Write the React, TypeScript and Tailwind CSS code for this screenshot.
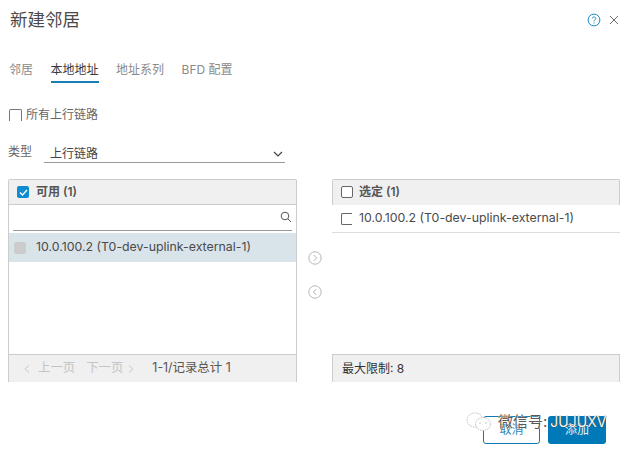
const font = { fontFamily: 'Inter, "Noto Sans CJK SC", sans-serif' };

function Wechat() {
  return (
    <svg width="26" height="20" viewBox="0 0 26 20" fill="none" stroke="#bdbdbd" strokeWidth="1" strokeDasharray="1.5 1">
      <ellipse cx="9" cy="8" rx="8" ry="7" />
      <ellipse cx="17" cy="12" rx="7.5" ry="6.5" fill="#fff" />
      <circle cx="14" cy="11" r="0.6" fill="#888" stroke="none" />
      <circle cx="20" cy="11" r="0.6" fill="#888" stroke="none" />
    </svg>
  );
}

function CircleArrow({ left }: { left?: boolean }) {
  return (
    <svg width="14" height="14" viewBox="0 0 14 14" fill="none" stroke="#b5b5b5" strokeWidth="1">
      <circle cx="7" cy="7" r="6.2" />
      <path d={left ? "M8.3 4 L5.3 7 L8.3 10" : "M5.7 4 L8.7 7 L5.7 10"} />
    </svg>
  );
}

export default function App() {
  return (
    <div className="relative w-[625px] h-[449px] bg-white overflow-hidden text-[#565656] pt-[8px]" style={font}>
      {/* title */}
      <div className="flex items-center justify-between pl-[10px] pr-[6px] h-[24px]">
        <span className="text-[17.5px] leading-[24px] text-[#4a4a4a]">新建邻居</span>
        <div className="flex items-center gap-[8px] text-[#555]">
          <svg width="14" height="14" viewBox="0 0 14 14" fill="none" stroke="#1b8ac6" strokeWidth="1">
            <circle cx="7" cy="7" r="5.9" />
            <path d="M5.2 5.4 C5.3 3.4 8.8 3.5 8.8 5.5 C8.8 6.9 7 6.8 7 8.4 M7 9.6 V10.6" />
          </svg>
          <svg width="10" height="10" viewBox="0 0 10 10" fill="none" stroke="#6b6b6b" strokeWidth="1">
            <path d="M1 1 L9 9 M9 1 L1 9" />
          </svg>
        </div>
      </div>

      {/* tabs */}
      <div className="flex gap-[17.5px] pl-[9px] mt-[29px] h-[22px] text-[12px] leading-[17px] text-[#8a8a8a]">
        <span>邻居</span>
        <span className="text-[#3a3a3a] h-[22px] border-b-2 border-[#1a7fb5]">本地地址</span>
        <span>地址系列</span>
        <span>BFD 配置</span>
      </div>

      {/* all uplinks */}
      <div className="flex items-center gap-[4px] pl-[9px] mt-[24px] h-[16px] text-[12px] text-[#666]">
        <span className="w-[13px] h-[12px] border-l border-r border-t border-[#777] rounded-t-[2px] block" />
        <span>所有上行链路</span>
      </div>

      {/* type */}
      <div className="flex pl-[8px] mt-[18px] h-[25px]">
        <span className="text-[12px] leading-[22px] text-[#666] w-[36px]">类型</span>
        <div className="w-[241px] h-[24px] mt-[-2px] pt-[7px] flex items-center justify-between pl-[6px] pr-[1px] border-b border-[#9a9a9a] text-[12px] text-[#444]">
          <span>上行链路</span>
          <svg width="10" height="6" viewBox="0 0 10 6" fill="none" stroke="#444" strokeWidth="1.2" className="mr-[1px]">
            <path d="M1 1 L5 5 L9 1" />
          </svg>
        </div>
      </div>

      {/* panels */}
      <div className="flex mt-[13px] pl-[8px] h-[203px]">
        <div className="w-[289px] h-[203px] flex flex-col border-l border-r border-t border-[#cccccc] rounded-t-[2px]">
          <div className="h-[25px] shrink-0 flex items-center gap-[7px] pl-[8px] bg-[#f0f0f0] border-b border-[#cccccc] text-[12px] font-semibold text-[#555]">
            <span className="w-[12px] h-[12px] rounded-[2px] bg-[#0f8bd0] flex items-center justify-center">
              <svg width="9" height="7" viewBox="0 0 9 7" fill="none" stroke="#fff" strokeWidth="1.4">
                <path d="M1 3.5 L3.5 6 L8 1" />
              </svg>
            </span>
            <span>可用 (1)</span>
          </div>
          <div className="h-[26px] shrink-0 mx-[4px] flex items-center justify-end border-b border-[#9a9a9a]">
            <svg width="12" height="12" viewBox="0 0 12 12" fill="none" stroke="#555" strokeWidth="1" className="mt-[-1px]">
              <circle cx="5" cy="5" r="3.8" />
              <path d="M8 8 L11 11" />
            </svg>
          </div>
          <div className="h-[29px] shrink-0 mt-[2px] flex items-center gap-[10px] pl-[5px] bg-[#d9e4ea] text-[12.35px] text-[#4a4a4a]">
            <span className="w-[12px] h-[12px] rounded-[2px] bg-[#cccccc]" />
            <span>10.0.100.2 (T0-dev-uplink-external-1)</span>
          </div>
          <div className="flex-1" />
          <div className="h-[28px] shrink-0 flex items-center pl-[14px] bg-[#f0f0f0] border-t border-[#cccccc] text-[12.4px] text-[#c4c4c4]">
            <svg width="8" height="10" viewBox="0 0 8 10" fill="none" stroke="#c8c8c8" strokeWidth="1">
              <path d="M6 1.5 L2 5 L6 8.500" />
            </svg>
            <span className="ml-[7px]">上一页</span>
            <span className="ml-[11px]">下一页</span>
            <svg width="8" height="10" viewBox="0 0 8 10" fill="none" stroke="#c8c8c8" strokeWidth="1" className="ml-[4px]">
              <path d="M2 1.500 L6 5 L2 8.500" />
            </svg>
            <span className="ml-[17px] text-[#565656]">1-1/记录总计 1</span>
          </div>
        </div>

        <div className="w-[35px] shrink-0 flex flex-col items-center pt-[72px] gap-[20px]">
          <CircleArrow />
          <CircleArrow left />
        </div>

        <div className="w-[288px] h-[203px] flex flex-col">
          <div className="h-[26px] shrink-0 flex items-center gap-[6px] pl-[8px] pb-[1px] bg-[#f0f0f0] border-l border-r border-t border-[#cccccc] rounded-t-[2px] text-[12px] font-semibold text-[#555]">
            <span className="w-[12px] h-[12px] rounded-[2px] border border-[#666] bg-white" />
            <span>选定 (1)</span>
          </div>
          <div className="h-[28px] shrink-0 flex items-center gap-[7px] pl-[9px] border-b border-[#dddddd] text-[12.35px] text-[#4a4a4a]">
            <span className="w-[11px] h-[12px] border-l border-t border-b border-[#666] rounded-l-[2px]" />
            <span>10.0.100.2 (T0-dev-uplink-external-1)</span>
          </div>
          <div className="flex-1" />
          <div className="h-[28px] shrink-0 flex items-center pl-[9px] bg-[#f0f0f0] border border-b-0 border-[#cccccc] text-[12px] text-[#333]">
            最大限制: 8
          </div>
        </div>
      </div>

      {/* buttons */}
      <div className="flex justify-end gap-[8px] pr-[19px] mt-[34px]">
        <div className="w-[57px] h-[28px] border border-[#0f79b4] rounded-[3px] flex items-center justify-center text-[12px] leading-[14px] text-[#2b86ba]">取消</div>
        <div className="w-[58px] h-[28px] bg-[#0079b8] rounded-[3px] flex items-center justify-center text-[12px] leading-[14px] text-[#e8f3f9]">添加</div>
      </div>

      {/* watermark */}
      <div className="absolute left-[466px] top-[411px] flex items-center gap-[6px] h-[22px]">
        <Wechat />
        <span className="text-[15px] leading-[22px] text-[#5a5a5a]" style={{ textShadow: "0 0 1px #fff, 0 0 1px #fff" }}>
          微信号:<span className="ml-[3px] text-[14px] text-[#f5f5f5]" style={{ textShadow: "0 0 1px #444, 0 0 1px #444" }}>JUJUXV</span>
        </span>
      </div>
    </div>
  );
}
